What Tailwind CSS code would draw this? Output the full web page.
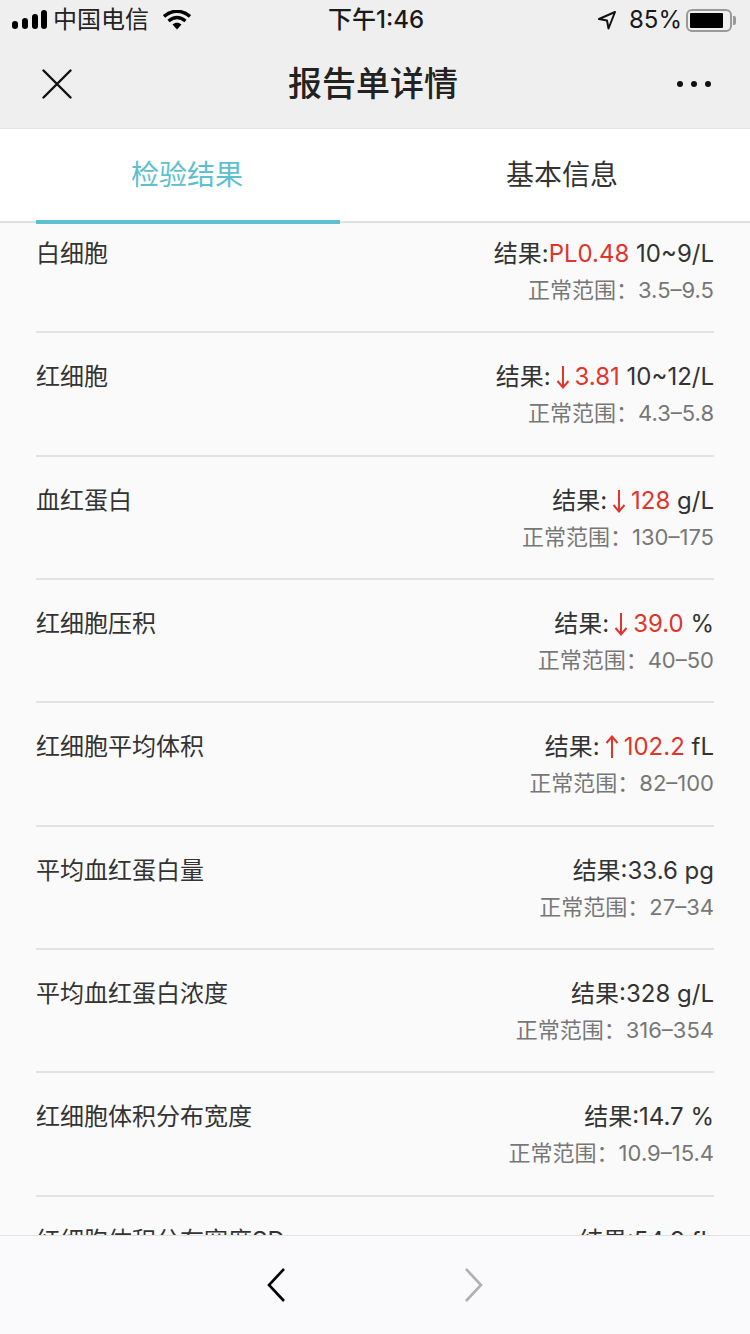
<!DOCTYPE html>
<html lang="zh">
<head>
  <meta charset="UTF-8" />
  <meta name="viewport" content="width=device-width, initial-scale=1" />
  <title>报告单详情</title>
  <script src="https://cdn.jsdelivr.net/npm/@tailwindcss/browser@4"></script>
</head>
<body class="bg-[#fafafa] text-[#333] font-['Inter','Noto_Sans_CJK_SC',sans-serif]">
  <div class="w-[750px] h-[1334px] flex flex-col overflow-hidden">
    <!-- status bar + nav -->
    <header class="bg-[#efeff0] h-[129px] shrink-0 border-b border-[#e4e4e4] text-[#1a1a1a]">
      <div class="h-[40px] relative flex items-center justify-between pl-[12px] pr-[11px] text-[24px]">
        <div class="flex items-center">
          <svg width="36" height="20" viewBox="0 0 36 20" fill="#000"><rect x="0" y="11" width="6" height="8" rx="3"/><rect x="10" y="8" width="6" height="11" rx="3"/><rect x="20" y="4" width="6" height="15" rx="3"/><rect x="29" y="0" width="6" height="19" rx="3"/></svg>
          <span class="ml-[5px] leading-none text-[#222]">中国电信</span>
          <svg class="ml-[14px]" width="28" height="20" viewBox="0 0 28 20"><path d="M1 6.5C9 -0.5 19 -0.5 27 6.5M5.5 11C11 6.5 17 6.5 22.5 11" fill="none" stroke="#000" stroke-width="3.4"/><path d="M9.5 14.5C12.5 12 15.5 12 18.5 14.5L14 19.5Z" fill="#000"/></svg>
        </div>
        <span class="absolute left-[328px] top-[3px] leading-[34px] font-medium">下午1:46</span>
        <div class="flex items-center">
          <svg width="20" height="20" viewBox="0 0 20 20"><path d="M18 2L2 9L10 10.5L11.5 18.5Z" fill="none" stroke="#111" stroke-width="2" stroke-linejoin="round"/></svg>
          <span class="ml-[12px] leading-none">85%</span>
          <div class="ml-[4px] w-[46px] h-[23px] rounded-[6px] border-2 border-[#999] p-[2px] pr-[7px]"><div class="h-full bg-black rounded-[1px]"></div></div>
          <div class="ml-[1px] mr-[3px] w-[3px] h-[9px] bg-[#999] rounded-r-[2px]"></div>
        </div>
      </div>
      <nav class="h-[88px] flex items-center justify-between pl-[42px] pr-[39px]">
        <svg width="30" height="30" viewBox="0 0 30 30"><path d="M1.5 1.5L28.5 28.5M28.5 1.5L1.5 28.5" stroke="#111" stroke-width="2.4" stroke-linecap="round"/></svg>
        <h1 class="text-[34px] font-medium leading-none -ml-[3px] text-[#222]">报告单详情</h1>
        <div class="flex gap-[8px]"><span class="w-[6px] h-[6px] rounded-full bg-[#111]"></span><span class="w-[6px] h-[6px] rounded-full bg-[#111]"></span><span class="w-[6px] h-[6px] rounded-full bg-[#111]"></span></div>
      </nav>
    </header>

    <!-- tabs -->
    <div class="h-[94px] shrink-0 bg-white border-b-2 border-[#e0e0e0] flex px-[36px] text-[28px] gap-[70px]">
      <div class="w-[304px] h-[95px] border-b-4 border-[#5cc0d0] text-[#5cc0d0] flex items-center justify-center pr-[2px]">检验结果</div>
      <div class="w-[304px] h-[92px] text-[#333] flex items-center justify-center">基本信息</div>
    </div>

    <!-- list -->
    <main class="flex-1 min-h-0 overflow-hidden">
      <div class="-mt-[13px] px-[36px]">
        <div class="h-[123.33px] border-b-2 border-[#e2e2e2] flex justify-between pt-[27px]">
          <div class="text-[24px] leading-[34px]">白细胞</div>
          <div class="text-right"><p class="text-[24px] leading-[34px]">结果:<span class="text-[#e0342c]">PL0.48</span> 10~9/L</p><p class="text-[22px] leading-[34px] mt-[2px] text-[#777]">正常范围：3.5–9.5</p></div>
        </div>
        <div class="h-[123.33px] border-b-2 border-[#e2e2e2] flex justify-between pt-[27px]">
          <div class="text-[24px] leading-[34px]">红细胞</div>
          <div class="text-right"><p class="text-[24px] leading-[34px]">结果:<svg class="inline-block align-[-4px] mx-[5px]" width="14" height="24" viewBox="0 0 14 24"><path d="M7 1V22M1.5 16L7 22.5L12.5 16" fill="none" stroke="#e0342c" stroke-width="2"/></svg><span class="text-[#e0342c]">3.81</span> 10~12/L</p><p class="text-[22px] leading-[34px] mt-[2px] text-[#777]">正常范围：4.3–5.8</p></div>
        </div>
        <div class="h-[123.33px] border-b-2 border-[#e2e2e2] flex justify-between pt-[27px]">
          <div class="text-[24px] leading-[34px]">血红蛋白</div>
          <div class="text-right"><p class="text-[24px] leading-[34px]">结果:<svg class="inline-block align-[-4px] mx-[5px]" width="14" height="24" viewBox="0 0 14 24"><path d="M7 1V22M1.5 16L7 22.5L12.5 16" fill="none" stroke="#e0342c" stroke-width="2"/></svg><span class="text-[#e0342c]">128</span> g/L</p><p class="text-[22px] leading-[34px] mt-[2px] text-[#777]">正常范围：130–175</p></div>
        </div>
        <div class="h-[123.33px] border-b-2 border-[#e2e2e2] flex justify-between pt-[27px]">
          <div class="text-[24px] leading-[34px]">红细胞压积</div>
          <div class="text-right"><p class="text-[24px] leading-[34px]">结果:<svg class="inline-block align-[-4px] mx-[5px]" width="14" height="24" viewBox="0 0 14 24"><path d="M7 1V22M1.5 16L7 22.5L12.5 16" fill="none" stroke="#e0342c" stroke-width="2"/></svg><span class="text-[#e0342c]">39.0</span> %</p><p class="text-[22px] leading-[34px] mt-[2px] text-[#777]">正常范围：40–50</p></div>
        </div>
        <div class="h-[123.33px] border-b-2 border-[#e2e2e2] flex justify-between pt-[27px]">
          <div class="text-[24px] leading-[34px]">红细胞平均体积</div>
          <div class="text-right"><p class="text-[24px] leading-[34px]">结果:<svg class="inline-block align-[-4px] mx-[5px]" width="14" height="24" viewBox="0 0 14 24"><path d="M7 23V2M1.5 8L7 1.5L12.5 8" fill="none" stroke="#e0342c" stroke-width="2"/></svg><span class="text-[#e0342c]">102.2</span> fL</p><p class="text-[22px] leading-[34px] mt-[2px] text-[#777]">正常范围：82–100</p></div>
        </div>
        <div class="h-[123.33px] border-b-2 border-[#e2e2e2] flex justify-between pt-[27px]">
          <div class="text-[24px] leading-[34px]">平均血红蛋白量</div>
          <div class="text-right"><p class="text-[24px] leading-[34px]">结果:33.6 pg</p><p class="text-[22px] leading-[34px] mt-[2px] text-[#777]">正常范围：27–34</p></div>
        </div>
        <div class="h-[123.33px] border-b-2 border-[#e2e2e2] flex justify-between pt-[27px]">
          <div class="text-[24px] leading-[34px]">平均血红蛋白浓度</div>
          <div class="text-right"><p class="text-[24px] leading-[34px]">结果:328 g/L</p><p class="text-[22px] leading-[34px] mt-[2px] text-[#777]">正常范围：316–354</p></div>
        </div>
        <div class="h-[123.33px] border-b-2 border-[#e2e2e2] flex justify-between pt-[27px]">
          <div class="text-[24px] leading-[34px]">红细胞体积分布宽度</div>
          <div class="text-right"><p class="text-[24px] leading-[34px]">结果:14.7 %</p><p class="text-[22px] leading-[34px] mt-[2px] text-[#777]">正常范围：10.9–15.4</p></div>
        </div>
        <div class="h-[123.33px] flex justify-between pt-[27px]">
          <div class="text-[24px] leading-[34px]">红细胞体积分布宽度SD</div>
          <div class="text-right"><p class="text-[24px] leading-[34px]">结果:54.9 fL</p></div>
        </div>
      </div>
    </main>

    <!-- bottom toolbar -->
    <footer class="h-[99px] shrink-0 bg-[#fafafc] border-t border-[#e2e2e2] flex items-center justify-center gap-[178px] pb-[1px]">
      <svg width="20" height="34" viewBox="0 0 20 34"><path d="M18 1L3 17L18 33" fill="none" stroke="#000" stroke-width="2.6"/></svg>
      <svg width="20" height="34" viewBox="0 0 20 34"><path d="M2 1L17 17L2 33" fill="none" stroke="#b0b0b0" stroke-width="2.6"/></svg>
    </footer>
  </div>
</body>
</html>
